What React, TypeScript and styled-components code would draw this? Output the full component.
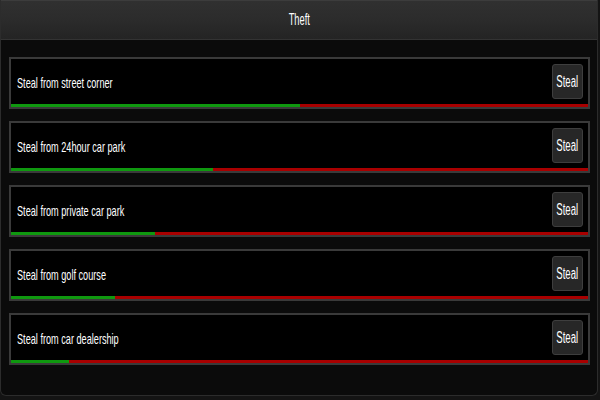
import React from "react";
import styled, { createGlobalStyle } from "styled-components";

type Job = {
  label: string;
  progress: number;
};

const JOBS: Job[] = [
  { label: "Steal from street corner", progress: 0.5 },
  { label: "Steal from 24hour car park", progress: 0.35 },
  { label: "Steal from private car park", progress: 0.25 },
  { label: "Steal from golf course", progress: 0.18 },
  { label: "Steal from car dealership", progress: 0.1 },
];

const GlobalStyle = createGlobalStyle`
  html, body {
    margin: 0;
    padding: 0;
    background: #141414;
    font-family: "Liberation Sans", Arial, sans-serif;
  }
`;

export default function App() {
  return (
    <>
      <GlobalStyle />
      <Panel>
        <Header>
          <Squeezed $scale={0.58}>Theft</Squeezed>
        </Header>
        <JobList>
          {JOBS.map((job) => (
            <JobCard key={job.label}>
              <JobRow>
                <JobLabel>
                  <Squeezed $scale={0.61} $origin="left">
                    {job.label}
                  </Squeezed>
                </JobLabel>
                <StealButton>
                  <Squeezed $scale={0.6}>Steal</Squeezed>
                </StealButton>
              </JobRow>
              <ProgressTrack>
                <ProgressFill style={{ width: `${job.progress * 100}%` }} />
              </ProgressTrack>
            </JobCard>
          ))}
        </JobList>
      </Panel>
    </>
  );
}

const Panel = styled.div`
  box-sizing: border-box;
  width: 598px;
  height: 396px;
  background: #0b0b0b;
  border: 1px solid #2c2c2c;
  border-top: none;
  border-radius: 0 0 6px 6px;
  display: flex;
  flex-direction: column;
  overflow: hidden;
`;

const Header = styled.div`
  box-sizing: border-box;
  height: 40px;
  flex: none;
  display: flex;
  align-items: center;
  justify-content: center;
  background: linear-gradient(#303030, #2c2c2c 45%, #242424);
  border-top: 1px solid #3c3c3c;
  border-bottom: 1px solid #333;
  color: #fff;
  font-size: 16px;
`;

const Squeezed = styled.span<{ $scale: number; $origin?: string }>`
  display: inline-block;
  white-space: nowrap;
  transform: scaleX(${({ $scale }) => $scale});
  transform-origin: ${({ $origin }) => $origin || "center"};
`;

const JobList = styled.div`
  display: flex;
  flex-direction: column;
  gap: 12px;
  padding: 17px 7px 0 8px;
`;

const JobCard = styled.div`
  box-sizing: border-box;
  height: 52px;
  background: #000;
  border: 2px solid #3a3a3a;
  display: flex;
  flex-direction: column;
`;

const JobRow = styled.div`
  flex: 1;
  display: flex;
  align-items: center;
  justify-content: space-between;
  padding: 0 5px 0 6px;
`;

const JobLabel = styled.div`
  flex: 1;
  overflow: visible;
  color: #fff;
  font-size: 15px;
  padding-top: 2px;
`;

const StealButton = styled.button`
  box-sizing: border-box;
  width: 31px;
  height: 35px;
  padding: 0;
  display: flex;
  align-items: center;
  justify-content: center;
  background: #272727;
  border: 1px solid #3e3e3e;
  border-radius: 3px;
  color: #fff;
  font-family: "Liberation Sans", Arial, sans-serif;
  font-size: 16px;
  cursor: pointer;
`;

const ProgressTrack = styled.div`
  height: 3px;
  background: #a80000;
  flex: none;
`;

const ProgressFill = styled.div`
  height: 100%;
  background: #0f980f;
`;
